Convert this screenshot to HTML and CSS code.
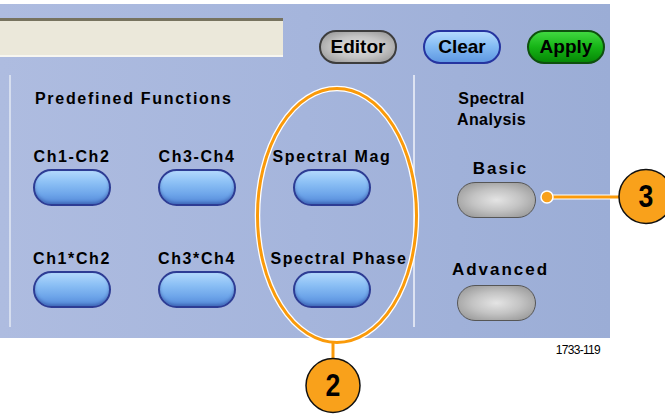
FILE: index.html
```html
<!DOCTYPE html>
<html>
<head>
<meta charset="utf-8">
<link rel="stylesheet" href="styles.css">
</head>
<body>
<div class="figure">
  <div class="panel">
    <div class="topbar">
      <div class="textbox"></div>
      <div class="actions">
        <button class="act act-gray">Editor</button>
        <button class="act act-blue">Clear</button>
        <button class="act act-green">Apply</button>
      </div>
    </div>
    <div class="body">
      <section class="predef">
        <h2 class="predef-title">Predefined Functions</h2>
        <div class="fn-grid">
          <div class="fn"><span class="fn-label">Ch1-Ch2</span><span class="key key-blue"></span></div>
          <div class="fn"><span class="fn-label">Ch3-Ch4</span><span class="key key-blue"></span></div>
          <div class="fn"><span class="fn-label">Spectral Mag</span><span class="key key-blue"></span></div>
          <div class="fn"><span class="fn-label">Ch1*Ch2</span><span class="key key-blue"></span></div>
          <div class="fn"><span class="fn-label">Ch3*Ch4</span><span class="key key-blue"></span></div>
          <div class="fn"><span class="fn-label fn-label-wide">Spectral Phase</span><span class="key key-blue"></span></div>
        </div>
      </section>
      <section class="spectral">
        <h2 class="spectral-title">Spectral<br>Analysis</h2>
        <div class="sfn sfn-basic"><span class="sfn-label">Basic</span><span class="key key-gray"></span></div>
        <div class="sfn sfn-adv"><span class="sfn-label">Advanced</span><span class="key key-gray"></span></div>
      </section>
    </div>
  </div>
  <div class="figno">1733-119</div>

  <svg class="callouts" width="665" height="415" viewBox="0 0 665 415">
    <g fill="none">
      <ellipse cx="337" cy="215.5" rx="79.5" ry="127" stroke="#ffffff" stroke-width="5.5"/>
      <line x1="333" y1="342" x2="333" y2="362" stroke="#ffffff" stroke-width="5"/>
      <line x1="547" y1="197" x2="622" y2="197" stroke="#ffffff" stroke-width="5"/>
      <ellipse cx="337" cy="215.5" rx="79.5" ry="127" stroke="#fa9a0a" stroke-width="3"/>
      <line x1="333" y1="342" x2="333" y2="362" stroke="#fa9a0a" stroke-width="3"/>
      <line x1="547" y1="197" x2="622" y2="197" stroke="#fa9a0a" stroke-width="3"/>
    </g>
    <circle cx="547" cy="197" r="6" fill="#f9a11b" stroke="#ffffff" stroke-width="1.5"/>
    <circle cx="333" cy="385.5" r="27" fill="#f9a11b" stroke="#111111" stroke-width="1.5"/>
    <circle cx="646" cy="196.5" r="27" fill="#f9a11b" stroke="#111111" stroke-width="1.5"/>
    <text class="callout-num" transform="translate(333 396) scale(0.86 1)">2</text>
    <text class="callout-num" transform="translate(646 207) scale(0.86 1)">3</text>
  </svg>
</div>
</body>
</html>
```

FILE: styles.css
```css
html, body {
  margin: 0;
  padding: 0;
  background: #ffffff;
}

body {
  font-family: "Liberation Sans", Arial, sans-serif;
  color: #000;
}

.figure {
  position: relative;
  width: 665px;
  height: 415px;
  overflow: hidden;
}

.panel {
  margin-top: 4px;
  width: 610px;
  height: 334px;
  box-sizing: border-box;
  background: linear-gradient(90deg, #aebce0 0%, #a5b5dc 50%, #9badd6 100%);
  display: flex;
  flex-direction: column;
  padding-top: 14px;
}

.topbar {
  display: flex;
  align-items: flex-start;
}

.textbox {
  width: 283px;
  height: 39px;
  box-sizing: border-box;
  background: #ebe8da;
  border-top: 3px solid #77735f;
  border-bottom: 2px solid #f7f6f0;
}

.actions {
  display: flex;
  gap: 26px;
  margin-left: 36px;
  margin-top: 12px;
}

.act {
  width: 78px;
  height: 34px;
  box-sizing: border-box;
  border-radius: 17px;
  font-family: "Liberation Sans", Arial, sans-serif;
  font-weight: bold;
  font-size: 19px;
  color: #000;
  padding: 0;
  line-height: 30px;
}

.act-gray {
  border: 2px solid #3d3d3d;
  background: radial-gradient(ellipse at 50% 50%, #e2e2e2 0%, #c4c4c4 50%, #8e8e8e 100%);
}

.act-blue {
  border: 2px solid #2534a0;
  background: linear-gradient(180deg, #b4dafd 0%, #86bdf4 45%, #5f98e2 100%);
}

.act-green {
  border: 2px solid #0e500e;
  background: linear-gradient(180deg, #40d840 0%, #16b416 50%, #068806 100%);
}

.body {
  display: flex;
  margin-top: 11px;
  height: 252px;
}

.predef {
  margin-left: 9px;
  width: 406px;
  box-sizing: border-box;
  border-left: 2px solid #d6deef;
  border-right: 2px solid #dde3f2;
  padding-top: 14px;
}

.predef-title {
  margin: 0 0 0 24px;
  font-size: 16px;
  font-weight: bold;
  letter-spacing: 1.7px;
  line-height: 19px;
}

.fn-grid {
  display: grid;
  grid-template-columns: 122px 128px 142px;
  row-gap: 43px;
  margin-top: 39px;
}

.fn {
  display: flex;
  flex-direction: column;
  align-items: center;
  gap: 3px;
}

.fn-label {
  font-size: 16px;
  font-weight: bold;
  letter-spacing: 1.6px;
  line-height: 19px;
  white-space: nowrap;
}

.fn-label-wide {
  padding-left: 14px;
}

.key {
  display: block;
  width: 78px;
  height: 37px;
  box-sizing: border-box;
  border-radius: 19px;
}

.key-blue {
  border: 2px solid #2d3c94;
  background: linear-gradient(180deg, #b2d8fc 0%, #8cc0f5 35%, #6ea6ea 70%, #5488d8 100%);
  box-shadow: inset 0 -2px 3px rgba(30, 50, 130, 0.35);
}

.key-gray {
  width: 79px;
  height: 36px;
  border: 1.5px solid #565656;
  background: radial-gradient(ellipse at 50% 50%, #e4e4e4 0%, #c3c3c3 45%, #8d8d8d 100%);
}

.spectral {
  flex: 1;
  display: flex;
  flex-direction: column;
  align-items: center;
  padding-top: 13px;
  padding-right: 32px;
}

.spectral-title {
  margin: 0;
  padding-right: 10px;
  font-size: 16px;
  font-weight: bold;
  letter-spacing: 0.4px;
  line-height: 21px;
  text-align: center;
}

.sfn {
  display: flex;
  flex-direction: column;
  align-items: center;
}

.sfn-basic {
  margin-top: 29px;
  gap: 4px;
}

.sfn-adv {
  margin-top: 42px;
  gap: 6px;
}

.sfn-label {
  font-size: 17px;
  font-weight: bold;
  letter-spacing: 2px;
  line-height: 19px;
  white-space: nowrap;
  padding-left: 8px;
}

.figno {
  width: 600px;
  text-align: right;
  font-size: 12px;
  letter-spacing: -0.7px;
  margin-top: 5px;
}

.callouts {
  position: absolute;
  left: 0;
  top: 0;
  pointer-events: none;
}

.callout-num {
  font-family: "Liberation Sans", Arial, sans-serif;
  font-weight: bold;
  font-size: 31px;
  text-anchor: middle;
  fill: #000;
}
```
